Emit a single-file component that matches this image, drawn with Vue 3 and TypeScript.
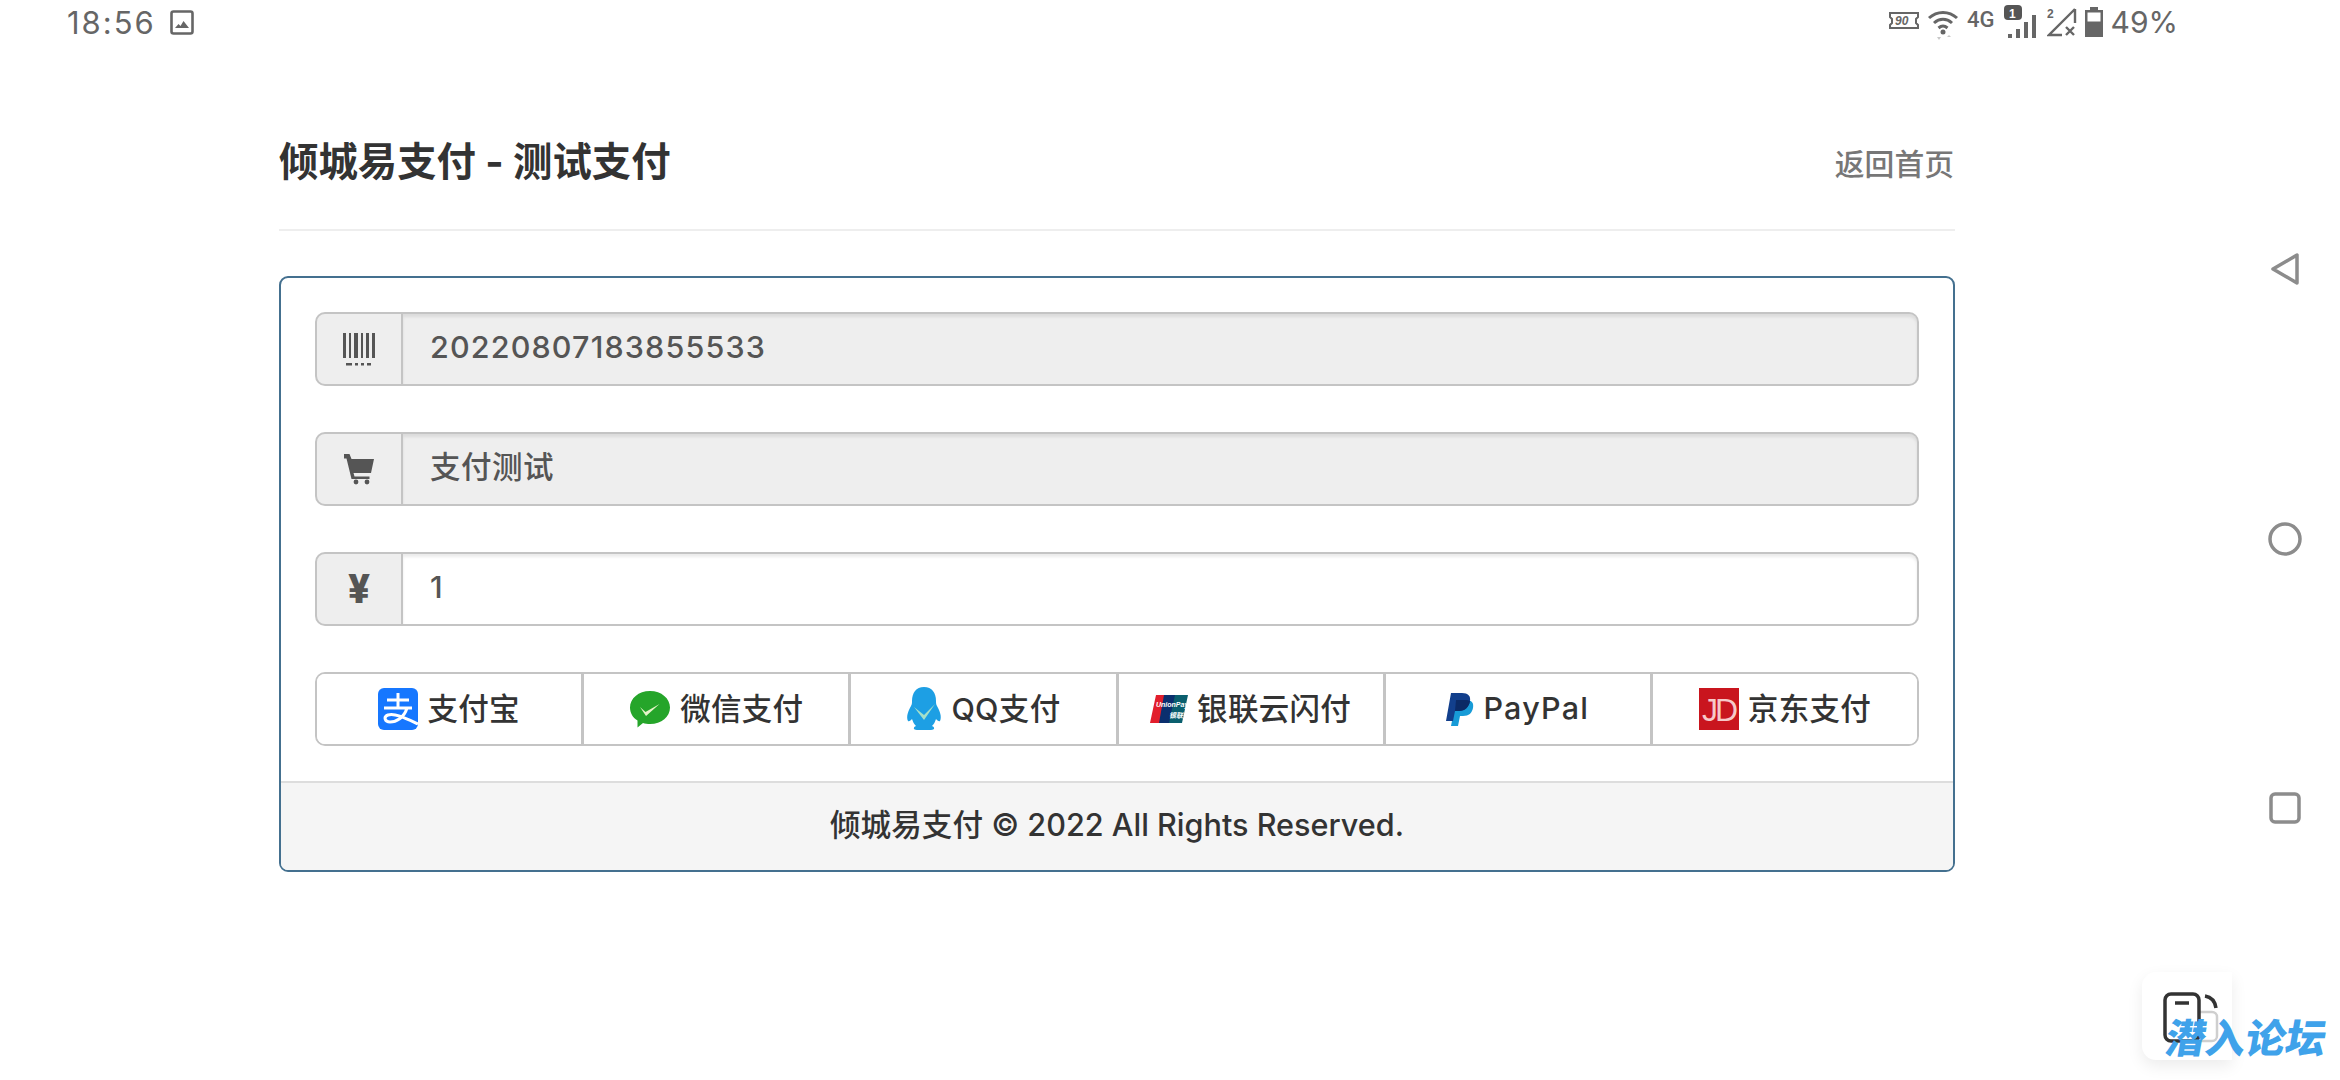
<script setup lang="ts">
// champs du formulaire de paiement
const fields = [
  { id: 'order', value: '20220807183855533', readonly: true },
  { id: 'name', value: '支付测试', readonly: true },
  { id: 'money', value: '1', readonly: false },
]

// boutons des moyens de paiement
const payments = [
  { id: 'alipay', label: '支付宝' },
  { id: 'wechat', label: '微信支付' },
  { id: 'qq', label: 'QQ支付' },
  { id: 'union', label: '银联云闪付' },
  { id: 'paypal', label: 'PayPal' },
  { id: 'jd', label: '京东支付' },
]
</script>

<template>
  <div class="screen">
    <div class="content">
      <header class="status-bar">
        <div class="status-left">
          <span class="clock">18:56</span>
          <svg class="pic-icon" viewBox="0 0 24 25" width="24" height="25">
            <rect x="1.5" y="1.5" width="21" height="22" rx="2" fill="none" stroke="#666" stroke-width="2.6" />
            <path d="M5 18l3.5-4 2 2 3-5 5.500 7z" fill="#666" />
          </svg>
        </div>
        <div class="status-right">
          <svg viewBox="0 0 30 24" width="30" height="24">
            <path d="M1 3h28v4l-2 2v4l2 2v3h-28v-3l2-2v-4l-2-2z" fill="none" stroke="#666" stroke-width="2" />
            <text x="6" y="15" class="hz">90</text>
          </svg>
          <svg class="wifi" viewBox="0 0 32 32" width="32" height="32">
            <path d="M2 10c8-7.500 20-7.500 28 0M7 15c5.500-5 12.500-5 18 0M11.500 20c3-2.600 6-2.600 9 0" fill="none" stroke="#666" stroke-width="3" />
            <circle cx="16" cy="24" r="2.500" fill="#666" />
            <path d="M10 29h4l-2 3zM20 29l2-2 2 2z" fill="#c8c8c8" />
          </svg>
          <span class="net">4G</span>
          <svg viewBox="0 0 36 34" width="36" height="34">
            <rect x="1" y="0" width="18" height="15" rx="4" fill="#555" />
            <text x="6" y="12.500" class="sim">1</text>
            <path d="M5 29h4v4h-4zM13 24h4v9h-4zM21 17h4v16h-4zM29 10h4v23h-4z" fill="#666" />
          </svg>
          <svg viewBox="0 0 30 30" width="30" height="30">
            <text x="0" y="11" class="sim-dark">2</text>
            <path d="M28 2v14M28 2l-26 26h13" fill="none" stroke="#666" stroke-width="2.400" />
            <path d="M19 20l8 8M27 20l-8 8" stroke="#666" stroke-width="2.400" />
          </svg>
          <svg viewBox="0 0 18 30" width="18" height="30">
            <path d="M5 0h8v3h5v27h-18v-27h5z" fill="#666" />
            <rect x="2.500" y="5.500" width="13" height="9" fill="#fff" />
          </svg>
          <span class="battery">49%</span>
        </div>
      </header>

      <main class="page">
        <div class="page-header">
          <h3 class="title">倾城易支付 - 测试支付</h3>
          <a class="home-link">返回首页</a>
        </div>

        <section class="panel">
          <div class="panel-body">
            <div v-for="field in fields" :key="field.id" class="input-group">
              <span class="addon">
                <svg v-if="field.id === 'order'" viewBox="0 0 34 34" width="34" height="34">
                  <path d="M1 1h3v25h-3zM7 1h2v25h-2zM12 1h4v25h-4zM19 1h2v25h-2zM24 1h3v25h-3zM30 1h3v25h-3z" fill="#555" />
                  <path d="M4 31h6v2.500h-6zM13 31h3v2.500h-3zM19 31h3v2.500h-3zM25 31h4v2.500h-4z" fill="#555" />
                </svg>
                <svg v-else-if="field.id === 'name'" viewBox="0 0 30 32" width="30" height="32">
                  <path d="M0 1h5.500l2 5h22.500l-3 14h-17.500l1 3.500h15v2.500h-18l-5-20.500h-2.500z" fill="#555" />
                  <circle cx="12" cy="29" r="2.400" fill="#555" />
                  <circle cx="23" cy="29" r="2.400" fill="#555" />
                </svg>
                <span v-else class="yen">¥</span>
              </span>
              <input class="field" :class="[field.id, { locked: field.readonly }]" :value="field.value" :readonly="field.readonly" />
            </div>

            <div class="pay-group">
              <button v-for="pay in payments" :key="pay.id" class="pay-btn" :class="pay.id" type="button">
                <svg v-if="pay.id === 'alipay'" viewBox="0 0 40 42" width="40" height="42">
                  <rect width="40" height="42" rx="6" fill="#1677ff" />
                  <path d="M9 12h22M20 5v14M6 20h28M29 20c-3 10-11 14-17 14-5 0-7-5-2-7 7-2 17 3 30 9" fill="none" stroke="#fff" stroke-width="3" />
                </svg>
                <svg v-else-if="pay.id === 'wechat'" viewBox="0 0 42 38" width="42" height="38">
                  <path d="M21 1c11.500 0 20 7.500 20 16.500s-8.500 16.500-20 16.500c-2.500 0-5-.4-7-1l-5.500 4.500v-7c-5-3-7.500-8-7.500-13 0-9 8.500-16.500 20-16.500z" fill="#25a52a" />
                  <path d="M11 17l5.500 5 14-8-13.500 12z" fill="#e6f3c8" />
                </svg>
                <svg v-else-if="pay.id === 'qq'" viewBox="0 0 36 44" width="36" height="44">
                  <path d="M18 0c8 0 12 6 12 14 0 2 0 3 1 5 3 5 5 11 3 15-1 1-3-1-4-2-1 3-2 5-4 7 3 1 3 4-1 4h-14c-4 0-4-3-1-4-2-2-3-4-4-7-1 1-3 3-4 2-2-4 0-10 3-15 1-2 1-3 1-5 0-8 4-14 12-14z" fill="#1d9fe4" />
                  <path d="M8 20l10 8 11-11-11 16z" fill="#a6e0c8" />
                </svg>
                <svg v-else-if="pay.id === 'union'" viewBox="0 0 38 28" width="38" height="28">
                  <path d="M6 0h13l-6 28h-13z" fill="#e21e2c" />
                  <path d="M14 0h14l-6 28h-13z" fill="#0a2f6e" />
                  <path d="M25 0h13l-6 28h-13z" fill="#0a5f6e" />
                  <text x="6" y="12" class="union-text">UnionPay</text>
                  <text x="19" y="23" class="union-text">银联</text>
                </svg>
                <svg v-else-if="pay.id === 'paypal'" viewBox="0 0 28 33" width="28" height="33">
                  <path d="M10 7h10c6 0 8 3 7 8-1 5-4 8-10 8h-3l-2 10h-7z" fill="#179bd7" />
                  <path d="M5 0h11c6 0 9 3 8 8-1 6-5 10-11 10h-4l-2 10h-7z" fill="#123f8c" />
                  <path d="M10 7h10c1 0 3 .5 4 1-1 6-5 10-11 10h-4z" fill="#0b2a66" />
                </svg>
                <svg v-else viewBox="0 0 40 42" width="40" height="42">
                  <rect width="40" height="42" fill="#c9151e" />
                  <text x="3" y="33" class="jd-text">JD</text>
                </svg>
                <span>{{ pay.label }}</span>
              </button>
            </div>
          </div>
          <footer class="panel-footer">倾城易支付 © 2022 All Rights Reserved.</footer>
        </section>
      </main>
    </div>

    <nav class="nav-rail">
      <svg viewBox="0 0 30 34" width="30" height="34">
        <path d="M27 3v28l-24-14z" fill="none" stroke="#8c8c8c" stroke-width="3.500" stroke-linejoin="round" />
      </svg>
      <svg viewBox="0 0 34 34" width="34" height="34">
        <circle cx="17" cy="17" r="15" fill="none" stroke="#8c8c8c" stroke-width="3.500" />
      </svg>
      <svg viewBox="0 0 32 32" width="32" height="32">
        <rect x="2" y="2" width="28" height="28" rx="4" fill="none" stroke="#8c8c8c" stroke-width="3.500" />
      </svg>
    </nav>

    <div class="float-card">
      <svg viewBox="0 0 60 52" width="60" height="52">
        <rect x="30" y="20" width="24" height="29" rx="5" fill="none" stroke="#cfcfcf" stroke-width="2.500" />
        <rect x="2" y="2" width="34" height="47" rx="6" fill="#fff" stroke="#333" stroke-width="3.500" />
        <path d="M12 11h14" stroke="#333" stroke-width="3.500" />
        <path d="M42 4c6 1 10 5 11 12" fill="none" stroke="#333" stroke-width="3.500" />
      </svg>
    </div>
    <span class="watermark">潜入论坛</span>
  </div>
</template>

<style>
html,
body {
  margin: 0;
  background: #fff;
  overflow: hidden;
}
</style>

<style scoped>
.screen {
  position: relative;
  display: flex;
  width: 2340px;
  height: 1080px;
  overflow: hidden;
  background: #fff;
  color: #333;
  font-family: Inter, "Noto Sans CJK SC", sans-serif;
}

.content {
  flex: 1;
  min-width: 0;
}

/* barre d'etat */
.status-bar {
  display: flex;
  justify-content: space-between;
  align-items: center;
  height: 44px;
  padding: 0 52px 0 67px;
  color: #666;
}

.status-left,
.status-right {
  display: flex;
  align-items: center;
}

.status-left {
  gap: 14px;
}

.status-right {
  gap: 8px;
}

.clock {
  font-size: 31px;
  letter-spacing: 2px;
}

.battery {
  font-size: 30px;
}

.net {
  font-size: 22px;
  font-family: Roboto, sans-serif;
  font-weight: 500;
  margin-top: -6px;
}

.wifi {
  margin-top: 4px;
}

.hz {
  font: italic 700 12px "Liberation Sans", sans-serif;
  fill: #666;
}

.sim {
  font: 700 12px "Liberation Sans", sans-serif;
  fill: #fff;
}

.sim-dark {
  font: 700 12px "Liberation Sans", sans-serif;
  fill: #666;
}

/* page */
.page {
  width: 1676px;
  margin-left: 279px;
}

.page-header {
  display: flex;
  justify-content: space-between;
  align-items: center;
  padding: 95px 1px 44px 0;
  border-bottom: 2px solid #eee;
}

.title {
  margin: 0;
  font-size: 39.400px;
  line-height: 46px;
  font-weight: 700;
  color: #333;
}

.home-link {
  font-size: 29.800px;
  font-weight: 500;
  color: #777;
}

.panel {
  margin-top: 45px;
  border: 2px solid #44708f;
  border-radius: 9px;
  overflow: hidden;
}

.panel-body {
  display: flex;
  flex-direction: column;
  gap: 46px;
  padding: 34px 34px 35px;
}

.input-group {
  display: flex;
  height: 74px;
}

.addon {
  display: flex;
  flex: none;
  justify-content: center;
  align-items: center;
  width: 88px;
  box-sizing: border-box;
  background: #eee;
  border: 2px solid #c4c4c4;
  border-radius: 10px 0 0 10px;
}

.yen {
  font-family: Roboto, sans-serif;
  font-size: 40px;
  font-weight: 900;
  color: #555;
}

.field {
  flex: 1;
  min-width: 0;
  box-sizing: border-box;
  height: 74px;
  padding: 0 27px 6px;
  background: #fff;
  border: 2px solid #c4c4c4;
  border-left: none;
  border-radius: 0 10px 10px 0;
  box-shadow: inset 0 3px 3px rgba(0, 0, 0, 0.08);
  color: #555;
  font-family: inherit;
  font-size: 30.500px;
  font-weight: 500;
  outline: none;
}

.field.locked {
  background: #eee;
}

.field.order {
  letter-spacing: 1.150px;
}

.field.name {
  padding-bottom: 8px;
  letter-spacing: 0.500px;
}

.pay-group {
  display: flex;
  height: 74px;
  box-sizing: border-box;
  border: 2px solid #c4c4c4;
  border-radius: 10px;
  overflow: hidden;
}

.pay-btn {
  display: flex;
  flex: 1;
  justify-content: center;
  align-items: center;
  gap: 9px;
  padding: 0;
  background: #fff;
  border: none;
  border-left: 3px solid #c4c4c4;
  color: #333;
  font-family: inherit;
  font-size: 30.500px;
  font-weight: 500;
}

.pay-btn:first-child {
  border-left: none;
}

.pay-btn span {
  margin-top: -4px;
  letter-spacing: 0.300px;
}

/* le latin est plus large dans la reference */
.pay-btn.paypal span {
  letter-spacing: 1.200px;
}

.union-text {
  font: italic 700 7px "Liberation Sans", "Noto Sans CJK SC", sans-serif;
  fill: #fff;
}

.jd-text {
  font: 400 32px "Liberation Sans", sans-serif;
  fill: #f6c9c9;
  letter-spacing: -3px;
}

.panel-footer {
  height: 89px;
  box-sizing: border-box;
  border-top: 2px solid #ddd;
  background: #f5f5f5;
  color: #333;
  font-size: 30.600px;
  font-weight: 500;
  line-height: 84px;
  text-align: center;
}

/* barre de navigation a droite */
.nav-rail {
  display: flex;
  flex: none;
  flex-direction: column;
  align-items: center;
  gap: 236px;
  width: 110px;
  padding-top: 252px;
}

.float-card {
  position: absolute;
  left: 2142px;
  top: 972px;
  width: 90px;
  height: 88px;
  box-sizing: border-box;
  padding: 20px 0 0 21px;
  background: #fff;
  border-radius: 14px 0 0 14px;
  box-shadow: 0 6px 16px rgba(0, 0, 0, 0.08);
}

.watermark {
  position: absolute;
  left: 2166px;
  top: 1014px;
  font-size: 40px;
  font-weight: 900;
  line-height: 50px;
  color: #3fa2ea;
  transform: skewX(-10deg);
}
</style>
